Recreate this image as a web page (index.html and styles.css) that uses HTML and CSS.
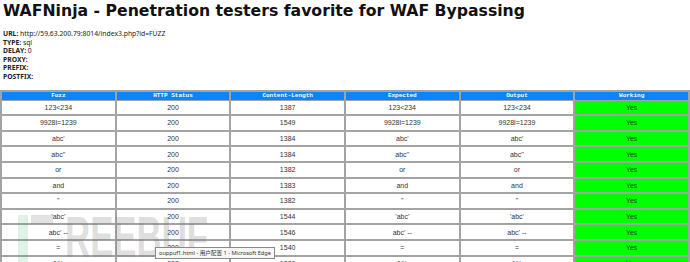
FILE: index.html
```html
<!DOCTYPE html>
<html>
<head>
<meta charset="utf-8">
<title>WAFNinja</title>
<link rel="stylesheet" href="styles.css">
</head>
<body>
<header class="top">
  <h1 class="title">WAFNinja - Penetration testers favorite for WAF Bypassing</h1>
  <div class="info">
    <div><b>URL:</b> http://59.63.200.79:8014/index3.php?id=FUZZ</div>
    <div><b>TYPE:</b> sql</div>
    <div><b>DELAY:</b> 0</div>
    <div><b>PROXY:</b></div>
    <div><b>PREFIX:</b></div>
    <div><b>POSTFIX:</b></div>
  </div>
</header>
<table class="results">
  <thead>
    <tr><th>Fuzz</th><th>HTTP Status</th><th>Content-Length</th><th>Expected</th><th>Output</th><th>Working</th></tr>
  </thead>
  <tbody>
    <tr><td>123&lt;234</td><td>200</td><td>1387</td><td>123&lt;234</td><td>123&lt;234</td><td class="ok">Yes</td></tr>
    <tr><td>9928l=1239</td><td>200</td><td>1549</td><td>9928l=1239</td><td>9928l=1239</td><td class="ok">Yes</td></tr>
    <tr><td>abc'</td><td>200</td><td>1384</td><td>abc'</td><td>abc'</td><td class="ok">Yes</td></tr>
    <tr><td>abc''</td><td>200</td><td>1384</td><td>abc''</td><td>abc''</td><td class="ok">Yes</td></tr>
    <tr><td>or</td><td>200</td><td>1382</td><td>or</td><td>or</td><td class="ok">Yes</td></tr>
    <tr><td>and</td><td>200</td><td>1383</td><td>and</td><td>and</td><td class="ok">Yes</td></tr>
    <tr><td>"</td><td>200</td><td>1382</td><td>"</td><td>"</td><td class="ok">Yes</td></tr>
    <tr><td>'abc'</td><td>200</td><td>1544</td><td>'abc'</td><td>'abc'</td><td class="ok">Yes</td></tr>
    <tr><td>abc' --</td><td>200</td><td>1546</td><td>abc' --</td><td>abc' --</td><td class="ok">Yes</td></tr>
    <tr><td>=</td><td>200</td><td>1540</td><td>=</td><td>=</td><td class="ok">Yes</td></tr>
    <tr><td>1%</td><td>200</td><td>1380</td><td>1%</td><td>1%</td><td class="ok">Yes</td></tr>
  </tbody>
</table>
<div class="watermark"><span class="wm-bar"></span><span class="wm-cross"></span><span class="wm-text">REEBUF</span></div>
<div class="tooltip">ouppuf1.html - 用户配置 1 - Microsoft Edge</div>
</body>
</html>
```
FILE: styles.css
```css
html, body {
  margin: 0;
  padding: 0;
  background: #ffffff;
  overflow: hidden;
}
body {
  font-family: "Liberation Sans", Arial, sans-serif;
  color: #000;
}
.top {
  padding: 2px 3px 0 3px;
}
.title {
  margin: 0;
  font-family: "DejaVu Sans", Verdana, sans-serif;
  font-weight: bold;
  font-size: 15.7px;
  line-height: 18px;
  color: #111;
}
.info {
  margin-top: 10px;
  font-family: "Noto Sans", "Open Sans", sans-serif;
  font-size: 6.8px;
  line-height: 8.6px;
  color: #222;
}
.info b {
  font-weight: bold;
}
.results {
  margin-top: 8px;
  width: 690px;
  table-layout: fixed;
  border-collapse: collapse;
  border: 2px solid #a3a3a3;
}
.results th {
  background: #0a84ff;
  color: #ffffff;
  font-family: "Liberation Mono", "Courier New", monospace;
  font-weight: bold;
  font-size: 6px;
  height: 8px;
  padding: 0;
  border: 2px solid #a3a3a3;
  border-bottom: 0;
  text-align: center;
}
.results td {
  height: 13.6px;
  padding: 0;
  border: 2px solid #a3a3a3;
  border-top-width: 1px;
  font-size: 7px;
  color: #333;
  text-align: center;
}
.results td.ok {
  background: #00ff00;
  color: #1e4a1e;
}
.watermark {
  position: absolute;
  left: 18px;
  top: 212px;
  height: 50px;
  display: flex;
  align-items: flex-start;
  pointer-events: none;
}
.wm-bar {
  display: block;
  width: 10px;
  height: 50px;
  margin-top: 3px;
  background: rgba(60, 170, 110, 0.16);
}
.wm-cross {
  display: block;
  width: 22px;
  height: 9px;
  margin-top: 3px;
  margin-left: 3px;
  background: rgba(110, 110, 110, 0.2);
}
.wm-text {
  display: block;
  margin-left: 12px;
  font-family: "Liberation Sans", Arial, sans-serif;
  font-weight: 900;
  font-size: 58px;
  line-height: 50px;
  color: rgba(110, 110, 110, 0.24);
  transform: scaleX(0.6);
  transform-origin: left top;
}
.tooltip {
  position: absolute;
  left: 155px;
  top: 247px;
  padding: 1px 3px;
  background: #f7f7f7;
  border: 1px solid #8a8a8a;
  font-family: "Noto Sans", "Noto Sans CJK SC", sans-serif;
  font-size: 5.6px;
  line-height: 8px;
  color: #333;
  white-space: nowrap;
}
```
